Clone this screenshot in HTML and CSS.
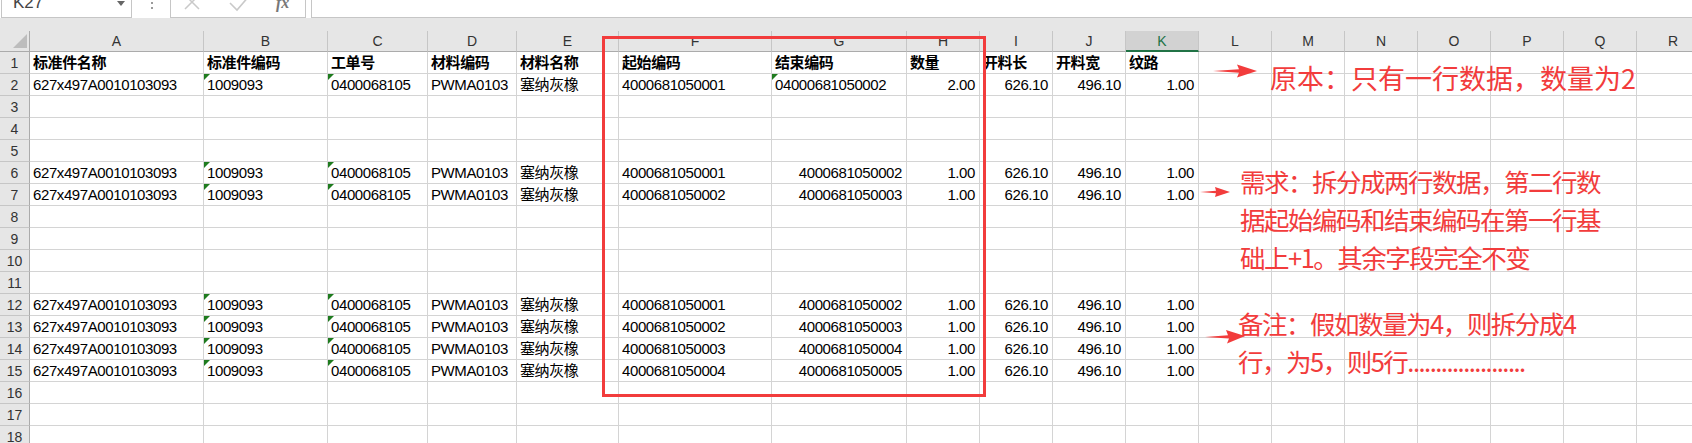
FILE: index.html
```html
<!DOCTYPE html>
<html lang="zh-CN">

<head>
    <meta charset="UTF-8">
    <meta name="viewport" content="width=device-width, initial-scale=1.0">
    <title>拆分数据</title>
    <link rel="stylesheet" href="styles.css">
</head>

<body>
    <div class="toolbar">
        <div class="name-box">
            <span>K27</span>
            <i class="drop"></i>
        </div>
        <div class="grip"></div>
        <div class="fx-box">
            <svg width="136" height="28" viewBox="0 0 136 28">
                <path d="M15 5 L29 19 M29 5 L15 19" stroke="#c9c9c9" stroke-width="1.5" fill="none" />
                <path d="M60 13 L67 20 L80 5" stroke="#c9c9c9" stroke-width="1.6" fill="none" />
                <text x="106" y="18" font-family="Liberation Serif" font-style="italic" font-weight="bold" font-size="16" fill="#777">fx</text>
            </svg>
        </div>
        <div class="formula-input"></div>
    </div>
    <div class="band"></div>

    <div class="sheet" id="sheet">
        <!-- 动态生成的单元格 -->
    </div>

    <!-- 标注 -->
    <div class="mark-box"></div>

    <svg class="arrow arrow-1" width="44" height="14" viewBox="0 0 44 14">
        <path d="M0 7 L26 5.2 L24 0.5 L44 7 L24 13.5 L26 8.8 Z" fill="#f23c3c" />
    </svg>
    <div class="note note-1">原本：只有一行数据，数量为2</div>

    <svg class="arrow arrow-2" width="30" height="12" viewBox="0 0 30 12">
        <path d="M0 6 L16 4.8 L15 1 L30 6 L15 11 L16 7.2 Z" fill="#f23c3c" />
    </svg>
    <div class="note note-2">需求：拆分成两行数据，第二行数<br>据起始编码和结束编码在第一行基<br>础上+1。其余字段完全不变</div>

    <svg class="arrow arrow-3" width="40" height="15" viewBox="0 0 40 15">
        <path d="M0 8 L23 6.3 L21 1 L40 7 L22 14.5 L24 9.5 Z" fill="#f23c3c" />
    </svg>
    <div class="note note-3">备注：假如数量为4，则拆分成4<br>行，为5，则5行.....................</div>

    <script>
        const columns = ['A', 'B', 'C', 'D', 'E', 'F', 'G', 'H', 'I', 'J', 'K', 'L', 'M', 'N', 'O', 'P', 'Q', 'R'];
        const activeColumn = 'K'; // 当前选中 K27
        const totalRows = 18;
        const base = 4000681050000; // 编码基数

        const header = ['标准件名称', '标准件编码', '工单号', '材料编码', '材料名称', '起始编码', '结束编码', '数量', '开料长', '开料宽', '纹路'];

        function record(start, end, qty, endAsText) {
            return [
                { t: '627x497A0010103093' },
                { t: '1009093', flag: true },
                { t: '0400068105', flag: true },
                { t: 'PWMA0103' },
                { t: '塞纳灰橡' },
                { t: String(start) },
                endAsText ? { t: '0' + end, flag: true } : { t: String(end), num: true },
                { t: qty, num: true },
                { t: '626.10', num: true },
                { t: '496.10', num: true },
                { t: '1.00', num: true }
            ];
        }

        const rows = {
            1: header.map(t => ({ t, bold: true })),
            2: record(base + 1, base + 2, '2.00', true),
            6: record(base + 1, base + 2, '1.00'),
            7: record(base + 2, base + 3, '1.00')
        };
        for (let k = 1; k <= 4; k++) {
            rows[11 + k] = record(base + k, base + k + 1, '1.00');
        }

        const sheet = document.getElementById('sheet');

        // 列标题
        const corner = document.createElement('div');
        corner.className = 'corner';
        sheet.appendChild(corner);
        columns.forEach(name => {
            const div = document.createElement('div');
            div.className = 'col-head' + (name === activeColumn ? ' active' : '');
            div.textContent = name;
            sheet.appendChild(div);
        });

        // 数据行
        for (let r = 1; r <= totalRows; r++) {
            const head = document.createElement('div');
            head.className = 'row-head';
            head.textContent = r;
            sheet.appendChild(head);

            const data = rows[r] || [];
            columns.forEach((name, i) => {
                const div = document.createElement('div');
                div.className = 'cell';
                const item = data[i];
                if (item) {
                    if (item.num) div.classList.add('num');
                    if (item.bold) div.classList.add('bold');
                    if (item.flag) div.classList.add('flag');
                    div.textContent = item.t;
                }
                sheet.appendChild(div);
            });
        }
    </script>
</body>

</html>
```

FILE: styles.css
```css
html,
body {
    width: 100%;
    height: 100%;
    margin: 0;
    padding: 0;
    overflow: hidden;
    background-color: white;
}

body {
    position: relative;
    font-family: "Liberation Sans", "Noto Sans CJK SC", sans-serif;
}

/* 顶部名称框和编辑栏 */
.toolbar {
    height: 18px;
    display: flex;
    align-items: flex-end;
    overflow: hidden;
}

.name-box {
    position: relative;
    flex: none;
    width: 131px;
    height: 28px;
    margin-left: 1px;
    box-sizing: border-box;
    border: 1px solid #c6c6c6;
    display: flex;
    align-items: flex-end;
}

.name-box span {
    font-size: 17px;
    line-height: 17px;
    color: #444;
    margin: 0 0 6px 11px;
}

.drop {
    position: absolute;
    right: 6px;
    bottom: 11px;
    width: 0;
    height: 0;
    border-top: 5px solid #666;
    border-left: 4px solid transparent;
    border-right: 4px solid transparent;
}

.grip {
    flex: none;
    align-self: flex-start;
    width: 2px;
    height: 2px;
    margin: 2px 0 0 19px;
    background-color: #9a9a9a;
    box-shadow: 0 5px 0 #9a9a9a;
}

.fx-box {
    flex: none;
    width: 136px;
    height: 28px;
    margin-left: 17px;
    box-sizing: border-box;
    border: 1px solid #c6c6c6;
    overflow: hidden;
}

.fx-box svg {
    display: block;
    margin: -1px 0 0 -1px;
}

.formula-input {
    flex: 1;
    height: 28px;
    margin-left: 5px;
    box-sizing: border-box;
    border: 1px solid #c6c6c6;
    border-right: none;
}

.band {
    height: 13px;
    background-color: #e6e6e6;
}

/* 表格 */
.sheet {
    display: grid;
    grid-template-columns: 30px 174px 124px 100px 89px 102px 153px 135px repeat(11, 73px);
    grid-auto-rows: 22px;
    grid-template-rows: 21px;
    font-size: 15px;
    letter-spacing: -0.4px;
    color: black;
}

.corner,
.col-head {
    box-sizing: border-box;
    background-color: #e6e6e6;
    border-bottom: 1px solid #ababab;
}

.corner {
    position: relative;
    border-right: 1px solid #ababab;
}

.corner::after {
    content: "";
    position: absolute;
    right: 2px;
    bottom: 3px;
    width: 0;
    height: 0;
    border-left: 14px solid transparent;
    border-bottom: 14px solid #bdbdbd;
}

.col-head {
    border-right: 1px solid #c6c6c6;
    text-align: center;
    font-size: 14px;
    letter-spacing: 0;
    line-height: 19px;
    padding-top: 1px;
    color: #333;
}

.col-head.active {
    background-color: #d2d2d2;
    color: #217346;
    border-bottom: 2px solid #217346;
}

.row-head {
    box-sizing: border-box;
    background-color: #e6e6e6;
    border-right: 1px solid #ababab;
    border-bottom: 1px solid #c6c6c6;
    text-align: center;
    font-size: 14px;
    letter-spacing: 0;
    line-height: 20px;
    padding-top: 1px;
    color: #333;
}

.cell {
    position: relative;
    box-sizing: border-box;
    border-right: 1px solid #d4d4d4;
    border-bottom: 1px solid #d4d4d4;
    padding: 1px 3px 0 3px;
    line-height: 20px;
    white-space: nowrap;
    overflow: hidden;
}

.cell.num {
    text-align: right;
    padding-right: 4px;
}

.cell.bold {
    font-weight: bold;
}

/* 文本格式数字的绿色角标 */
.cell.flag::before {
    content: "";
    position: absolute;
    left: 0;
    top: 0;
    width: 0;
    height: 0;
    border-top: 6px solid #1e7b1e;
    border-right: 6px solid transparent;
}

/* 红色标注 */
.mark-box {
    position: absolute;
    left: 602px;
    top: 36px;
    width: 384px;
    height: 361px;
    box-sizing: border-box;
    border: 3px solid #f23c3c;
}

.arrow {
    position: absolute;
    display: block;
}

.arrow-1 {
    left: 1213px;
    top: 64px;
}

.arrow-2 {
    left: 1200px;
    top: 186px;
}

.arrow-3 {
    left: 1205px;
    top: 329px;
}

.note {
    position: absolute;
    color: #f23c3c;
    font-family: "Noto Sans CJK SC", sans-serif;
    white-space: nowrap;
}

.note-1 {
    left: 1270px;
    top: 64px;
    font-size: 27px;
    line-height: 27px;
}

.note-2,
.note-3 {
    font-size: 25.5px;
    line-height: 38px;
    letter-spacing: -1.5px;
}

.note-2 {
    left: 1240px;
    top: 162px;
}

.note-3 {
    left: 1238px;
    top: 304px;
}
```
